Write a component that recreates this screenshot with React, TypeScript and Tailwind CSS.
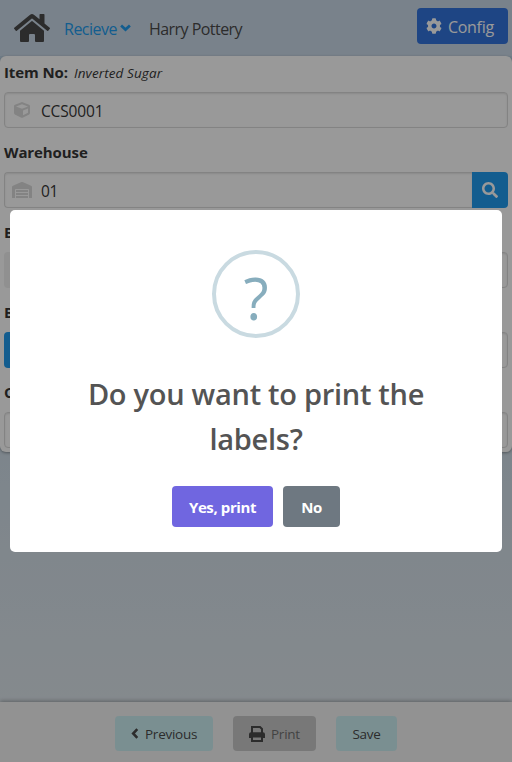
import { FaCog, FaCube, FaHome, FaSearch, FaWarehouse } from "react-icons/fa";
import type { ReactNode } from "react";

function Field({ label, note, children }: { label: string; note?: string; children: ReactNode }) {
  return (
    <div className="mb-3">
      <div className="mb-2 h-6 whitespace-nowrap text-[15px] leading-6 font-bold tracking-[-0.1px] text-[#363636]">
        {label}
        {note && <span className="ml-[6px] text-[13.5px] font-normal tracking-[0.1px] italic">{note}</span>}
      </div>
      <div className="flex h-9">{children}</div>
    </div>
  );
}

function PrinterIcon() {
  return (
    <svg viewBox="0 0 16 16" className="mr-[6px] size-4" fill="none" stroke="currentColor" strokeWidth="2">
      <path d="M3 7V1h8l2 2v4" />
      <path d="M2 6.2h12a2 2 0 0 1 2 2V12h-2.5v-1.5h-11V12H0V8.200a2 2 0 0 1 2-2z" fill="currentColor" stroke="none" />
      <path d="M3 10.500h10V15H3z" />
    </svg>
  );
}

const input =
  "flex h-9 flex-1 items-center rounded border border-[#dbdbdb] bg-white text-[15.5px] text-[#363636] shadow-[inset_0_1px_2px_rgba(10,10,10,0.1)]";

export default function App() {
  return (
    <div className="relative flex h-[762px] w-[512px] flex-col overflow-hidden bg-linear-to-b from-[#b8cfe2] to-[#e1e8ed] font-['Open_Sans','Noto_Sans',sans-serif] text-[#4a4a4a]">
      <header className="flex h-14 shrink-0 items-center bg-[#cad9e8] pl-[14px]">
        <FaHome className="h-9 w-9 text-[#4a4a4a]" />
        <span className="mt-px ml-[14px] flex items-center text-[16px] tracking-[-0.5px] text-[#209cee]">
          Recieve
          <svg viewBox="0 0 12 8" className="mb-px ml-[3px] h-2 w-[11px]" fill="none" stroke="currentColor" strokeWidth="3">
            <path d="M1.200 1.300 6 5.700l4.800-4.400" />
          </svg>
        </span>
        <span className="mt-px ml-[18px] text-[16px] tracking-[-0.55px]">Harry Pottery</span>
        <button className="mr-1 mb-1 ml-auto flex h-9 w-[91px] items-center rounded bg-[#3273dc] pl-[9px] text-[16px] tracking-[-0.3px] text-white">
          <FaCog className="mr-[6px] size-4" />
          <span className="mt-px">Config</span>
        </button>
      </header>

      <main className="h-[396px] shrink-0 rounded-md bg-white px-1 pt-1 shadow-[0_1px_3px_rgba(0,0,0,0.35)]">
        <Field label="Item No:" note="Inverted Sugar">
          <div className={input}>
            <FaCube className="ml-[9px] size-4 text-[#dbdbdb]" />
            <span className="mt-[3px] ml-[11px] tracking-[-0.15px]">CCS0001</span>
          </div>
        </Field>
        <Field label="Warehouse">
          <div className={input + " rounded-r-none border-r-0"}>
            <FaWarehouse className="ml-[7px] h-4 w-5 text-[#dbdbdb]" />
            <span className="mt-[3px] ml-[9px] tracking-[-0.3px]">01</span>
          </div>
          <button className="flex h-9 w-9 items-center justify-center rounded-r bg-[#209cee] text-white">
            <FaSearch className="size-4" />
          </button>
        </Field>
        <Field label="Batch">
          <div className="w-9 rounded-l bg-[#f0f0f0]" />
          <div className={input} />
        </Field>
        <Field label="Bin">
          <div className="w-9 rounded-l bg-[#209cee]" />
          <div className={input} />
        </Field>
        <Field label="Quantity">
          <div className={input} />
        </Field>
      </main>

      <footer className="mt-auto flex h-[60px] justify-center gap-5 bg-[#f3f3f3] pt-[14px] text-[13.5px] tracking-[-0.25px] shadow-[0_-1px_4px_rgba(0,0,0,0.3)]">
        <button className="flex h-[35px] w-[98px] items-center rounded bg-[#cceff2] pl-4">
          <svg viewBox="0 0 8 12" className="mr-[6px] h-[11px] w-2" fill="none" stroke="currentColor" strokeWidth="2.8">
            <path d="M6.500 1.200 2 6l4.500 4.800" />
          </svg>
          <span className="mt-px">Previous</span>
        </button>
        <button className="flex h-[35px] w-[83px] items-center rounded bg-[#c9c9c9] pl-4">
          <PrinterIcon />
          <span className="mt-px text-[#707070]">Print</span>
        </button>
        <button className="h-[35px] w-[61px] rounded bg-[#cceff2] pt-px">Save</button>
      </footer>

      <div className="absolute inset-0 flex items-center justify-center bg-black/40">
        <section className="flex h-[342px] w-[492px] flex-col items-center rounded-[5px] bg-white pt-10">
          <div className="flex size-[88px] items-center justify-center rounded-full border-4 border-[#c9dae1] pt-[7px] text-[58px] leading-[73px] text-[#87adbd]">
            ?
          </div>
          <h2 className="mt-[33px] w-[400px] text-center text-[29px] leading-[45px] font-semibold tracking-[-0.28px] text-[#545454]">
            Do you want to print the
            <br />
            labels?
          </h2>
          <div className="mt-[25px] flex gap-[10px] text-[15px] font-bold tracking-[-0.4px] text-white">
            <button className="h-[41px] w-[101px] rounded bg-[#7066e0] pt-[2px]">Yes, print</button>
            <button className="h-[41px] w-[57px] rounded bg-[#6e7881] pt-[2px]">No</button>
          </div>
        </section>
      </div>
    </div>
  );
}
